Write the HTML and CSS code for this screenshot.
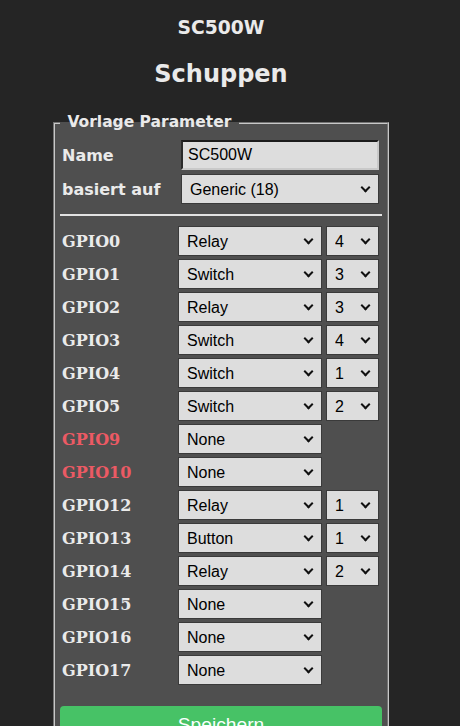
FILE: index.html
```html
<!DOCTYPE html>
<html lang="de">
<head>
<meta charset="utf-8">
<title>SC500W - Vorlage</title>
<link rel="stylesheet" href="styles.css">
</head>
<body>
<div class="main">
  <h3 class="dev">SC500W</h3>
  <h2 class="host">Schuppen</h2>
  <fieldset class="box">
    <legend class="lg">&nbsp;Vorlage Parameter&nbsp;</legend>
    <div class="top">
      <span class="lbl">Name</span>
      <input class="inp" type="text" value="SC500W">
      <span class="lbl">basiert auf</span>
      <div class="sel"><select><option>Generic (18)</option></select></div>
    </div>
    <hr class="sep">
    <div class="gpio">
      <span class="g">GPIO0</span>
      <div class="sel"><select><option>Relay</option></select></div>
      <div class="sel"><select><option>4</option></select></div>

      <span class="g">GPIO1</span>
      <div class="sel"><select><option>Switch</option></select></div>
      <div class="sel"><select><option>3</option></select></div>

      <span class="g">GPIO2</span>
      <div class="sel"><select><option>Relay</option></select></div>
      <div class="sel"><select><option>3</option></select></div>

      <span class="g">GPIO3</span>
      <div class="sel"><select><option>Switch</option></select></div>
      <div class="sel"><select><option>4</option></select></div>

      <span class="g">GPIO4</span>
      <div class="sel"><select><option>Switch</option></select></div>
      <div class="sel"><select><option>1</option></select></div>

      <span class="g">GPIO5</span>
      <div class="sel"><select><option>Switch</option></select></div>
      <div class="sel"><select><option>2</option></select></div>

      <span class="g warn">GPIO9</span>
      <div class="sel"><select><option>None</option></select></div>
      <span class="empty"></span>

      <span class="g warn">GPIO10</span>
      <div class="sel"><select><option>None</option></select></div>
      <span class="empty"></span>

      <span class="g">GPIO12</span>
      <div class="sel"><select><option>Relay</option></select></div>
      <div class="sel"><select><option>1</option></select></div>

      <span class="g">GPIO13</span>
      <div class="sel"><select><option>Button</option></select></div>
      <div class="sel"><select><option>1</option></select></div>

      <span class="g">GPIO14</span>
      <div class="sel"><select><option>Relay</option></select></div>
      <div class="sel"><select><option>2</option></select></div>

      <span class="g">GPIO15</span>
      <div class="sel"><select><option>None</option></select></div>
      <span class="empty"></span>

      <span class="g">GPIO16</span>
      <div class="sel"><select><option>None</option></select></div>
      <span class="empty"></span>

      <span class="g">GPIO17</span>
      <div class="sel"><select><option>None</option></select></div>
      <span class="empty"></span>
    </div>
    <button class="save" type="button">Speichern</button>
  </fieldset>
</div>
</body>
</html>
```

FILE: styles.css
```css
html, body {
  margin: 0;
  padding: 0;
  background: #252525;
}

body {
  color: #eaeaea;
  font-family: "DejaVu Sans", Verdana, sans-serif;
  width: 460px;
  height: 726px;
  overflow: hidden;
}

.main {
  width: 442px;
  display: flex;
  flex-direction: column;
  align-items: center;
}

.dev {
  margin: 17px 0 0;
  font-size: 18.72px;
  line-height: 22px;
  font-weight: bold;
}

.host {
  margin: 21px 0 0;
  font-size: 24px;
  line-height: 28px;
  font-weight: bold;
}

.box {
  box-sizing: border-box;
  width: 336px;
  margin: 25px 0 0;
  padding: 8px 5px 20px;
  border: 2px groove #c8c8c8;
  background: #4f4f4f;
  min-inline-size: 0;
}

.lg {
  padding: 0 2px;
  font-size: 15.5px;
  line-height: 19px;
  font-weight: bold;
}

.top {
  display: grid;
  grid-template-columns: 119px 198px;
  row-gap: 4px;
  padding: 0 2px;
  align-items: center;
}

.lbl {
  font-size: 16px;
  font-weight: bold;
}

.inp {
  box-sizing: border-box;
  width: 198px;
  height: 30px;
  margin: 0;
  padding: 0 5px;
  font-family: "Liberation Sans", Arial, sans-serif;
  font-size: 16px;
  color: #000;
  background: #dddddd;
  border: 2px solid #dddddd;
  border-top-color: #1c1c1c;
  border-left-color: #2a2a2a;
  border-right-color: #c9c9c9;
  border-bottom-color: #c9c9c9;
  outline: none;
}

.sel {
  position: relative;
  height: 30px;
}

.sel::after {
  content: "";
  position: absolute;
  right: 10px;
  top: 10px;
  width: 5px;
  height: 5px;
  border-right: 2.5px solid #111;
  border-bottom: 2.5px solid #111;
  transform: rotate(45deg);
  pointer-events: none;
}

.sel select {
  -webkit-appearance: none;
  appearance: none;
  box-sizing: border-box;
  display: block;
  width: 100%;
  height: 30px;
  margin: 0;
  padding: 0 0 0 8px;
  font-family: "Liberation Sans", Arial, sans-serif;
  font-size: 16px;
  color: #000;
  background: #dddddd;
  border: 1px solid #3a3a3a;
  border-radius: 0;
  outline: none;
}

.sep {
  margin: 10px 0 10px;
  height: 0;
  border: 0;
  border-top: 2px solid #e2e2e2;
}

.gpio {
  display: grid;
  grid-template-columns: 116px 144px 57px;
  row-gap: 3px;
  padding: 0 2px;
  align-items: center;
}

.gpio .sel:nth-child(3n) {
  margin-left: 4px;
}

.g {
  font-family: "DejaVu Serif", Georgia, serif;
  font-size: 16px;
  font-weight: bold;
  color: #eaeaea;
}

.g.warn {
  color: #ec5a64;
}

.save {
  display: block;
  width: 100%;
  height: 38px;
  margin: 21px 0 0;
  padding: 0;
  border: 0;
  border-radius: 4px;
  background: #47c266;
  color: #faffff;
  font-family: "Liberation Sans", Arial, sans-serif;
  font-size: 19.2px;
  line-height: 34px;
}
```
